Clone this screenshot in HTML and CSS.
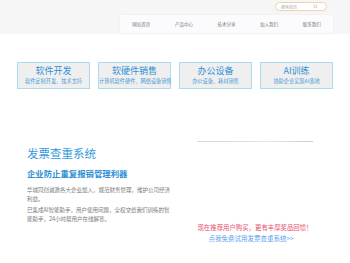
FILE: index.html
```html
<!DOCTYPE html>
<html lang="zh-CN">
  <head>
    <meta charset="UTF-8" />
    <meta name="viewport" content="width=device-width, initial-scale=1.0" />
    <title>发票查重系统</title>
    <link rel="stylesheet" href="styles.css">
  </head>
  <body>
    <div class="top">
      <div class="search">
        <span>搜索资讯</span>
        <svg width="5" height="5" viewBox="0 0 10 10"><circle cx="4.5" cy="4.5" r="3" fill="none" stroke="#c9b79a" stroke-width="1.2"/><line x1="6.8" y1="6.8" x2="9" y2="9" stroke="#c9b79a" stroke-width="1.2"/></svg>
      </div>
      <ul class="nav">
        <li>网站首页</li>
        <li>产品中心</li>
        <li>技术分享</li>
        <li>加入我们</li>
        <li>联系我们</li>
      </ul>
    </div>

    <div class="services">
      <div class="card">
        <h4>软件开发</h4>
        <p>软件定制开发、技术支持</p>
      </div>
      <div class="card">
        <h4>软硬件销售</h4>
        <p>计算机软件硬件、网络设备销售</p>
      </div>
      <div class="card">
        <h4>办公设备</h4>
        <p>办公设备、耗材销售</p>
      </div>
      <div class="card">
        <h4>AI训练</h4>
        <p>协助企业实现AI落地</p>
      </div>
    </div>

    <div class="intro">
      <div class="intro-left">
        <h2>发票查重系统</h2>
        <h3>企业防止重复报销管理利器</h3>
        <p>华城同创诚邀各大企业加入，规范财务管理，维护公司经济利益。</p>
        <p>已集成AI智能助手，用户使用问题，全权交给我们训练的智能助手，24小时帮用户在线解答。</p>
      </div>
      <div class="intro-right">
        <div class="line"></div>
        <p class="promo">现在推荐用户购买，更有丰厚奖品回馈！</p>
        <a class="try" href="#">点我免费试用发票查重系统&gt;&gt;</a>
      </div>
    </div>
  </body>
</html>
```

FILE: styles.css
```css
* {
  margin: 0;
  padding: 0;
  box-sizing: border-box;
}
body {
  background: #fff;
  font-family: "Noto Sans CJK SC", "Noto Sans", sans-serif;
}
.top {
  background: #f6f6f6;
  height: 34px;
  padding: 2px 17px 0 0;
  display: flex;
  flex-direction: column;
  align-items: flex-end;
}
.search {
  width: 52px;
  height: 9px;
  margin-right: 6px;
  border: 1px solid #f0d3ab;
  border-radius: 5px;
  background: #fff;
  display: flex;
  align-items: center;
  justify-content: space-between;
  padding: 0 8px 0 5px;
  font-size: 4px;
  color: #aaa;
}
.search svg {
  display: block;
}
.nav {
  list-style: none;
  margin-top: 4px;
  width: 213px;
  height: 18px;
  background: #fbfbfd;
  box-shadow: 0 0 2px rgba(0, 0, 0, 0.05);
  display: flex;
}
.nav li {
  flex: 1;
  text-align: center;
  line-height: 18px;
  font-size: 4.5px;
  color: #777;
}
.services {
  display: flex;
  gap: 8px;
  padding: 28px 0 0 17px;
}
.card {
  width: 73px;
  height: 27px;
  border: 1px solid #a9dcf1;
  background: #efefef;
  text-align: center;
  padding-top: 2px;
  white-space: nowrap;
}
.card h4 {
  font-size: 9px;
  line-height: 11px;
  font-weight: normal;
  color: #2f8fd4;
}
.card p {
  margin-top: 1px;
  font-size: 5.2px;
  line-height: 7px;
  color: #4a9bd8;
}
.intro {
  display: flex;
  margin-top: 48px;
}
.intro-left {
  width: 197px;
  padding: 9px 0 0 27px;
}
.intro-left h2 {
  font-size: 11.5px;
  line-height: 14px;
  font-weight: normal;
  color: #3399dd;
}
.intro-left h3 {
  margin-top: 8px;
  font-size: 8.4px;
  line-height: 10px;
  font-weight: bold;
  color: #2d8fd6;
}
.intro-left p {
  width: 26.5em;
  font-size: 5.5px;
  line-height: 9px;
  color: #777;
}
.intro-left h3 + p {
  margin-top: 7.5px;
}
.intro-left p + p {
  margin-top: 2px;
}
.intro-right {
  width: 116px;
  padding-top: 4px;
  text-align: center;
}
.line {
  height: 1px;
  background: linear-gradient(to right, #d4d8dc 0%, #d9dde2 30%, #cfe3f2 45%, #e4e8ec 60%, #cfe0ee 75%, #c9cdd2 100%);
}
.promo {
  margin-top: 81px;
  font-size: 6.4px;
  line-height: 9px;
  color: #e5546e;
  white-space: nowrap;
}
.try {
  display: block;
  margin-top: 2px;
  padding-right: 8px;
  font-size: 6.5px;
  line-height: 9px;
  color: #5b9ff0;
  text-decoration: none;
  white-space: nowrap;
}
```
